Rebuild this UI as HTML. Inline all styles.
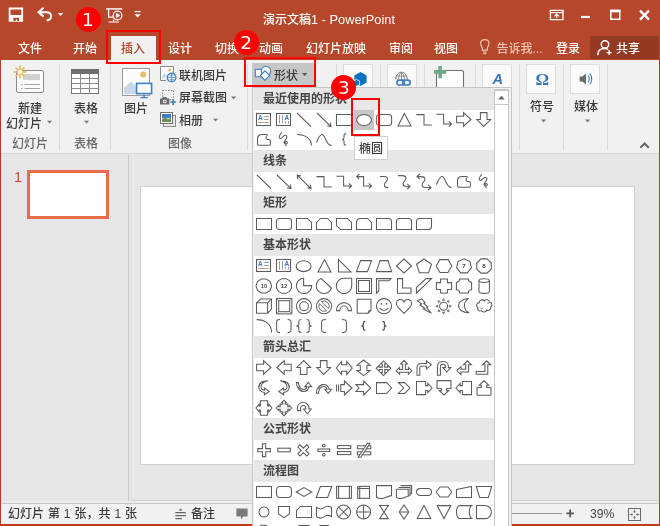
<!DOCTYPE html>
<html lang="zh-CN"><head><meta charset="utf-8"><title>PowerPoint</title>
<style>
html,body{margin:0;padding:0}
body{will-change:transform;width:660px;height:526px;overflow:hidden;position:relative;background:#e6e6e6;
 font-family:"Liberation Sans","Noto Sans CJK SC",sans-serif;font-size:12px;color:#3a3a3a;font-weight:500;}
.a{position:absolute}
.t{position:absolute;white-space:nowrap;line-height:16px;height:16px}
.w{color:#fff}
#title{left:0;top:0;width:660px;height:60px;background:#b7472a}
#ribbon{left:0;top:60px;width:660px;height:94px;background:#f1f1f1;border-bottom:1px solid #d4d4d4;box-sizing:border-box}
.sep{position:absolute;width:1px;background:#dadada;top:64px;height:86px}
.gl{color:#666}
.ibox{position:absolute;box-sizing:border-box;background:#fafafa;border:1px solid #dcdcdc}
#status{left:0;top:503px;width:660px;height:21px;background:#f1f1f1;border-top:1px solid #c9c9c9;box-sizing:border-box}
.hd{position:absolute;left:1px;width:240px;height:22px;background:#e7e7e7}
.hd span{position:absolute;left:9px;top:3px;line-height:16px;font-weight:bold;color:#444;white-space:nowrap}
.rb{position:absolute;box-sizing:border-box;border:2px solid #f00}
.num{position:absolute;width:25px;height:25px;border-radius:50%;background:#fe0000;color:#fff;
 font-family:"DejaVu Sans",sans-serif;font-size:18.5px;line-height:25px;text-align:center}
svg{position:absolute;overflow:visible}
</style></head>
<body>
<div class="a" id="title"></div>
<div class="a" style="left:111px;top:36px;width:45px;height:24px;background:#f1f1f1"></div>
<div class="a" style="left:590px;top:36px;width:69px;height:23px;background:#953a22"></div>
<svg style="left:0;top:0" width="660" height="60" viewBox="0 0 660 60" fill="none" stroke="#fff">
<!-- save -->
<path d="M9.6,8.5 H22.2 V20.8 H9.6 Z" stroke-width="1.8"/>
<path d="M9.6,15 H22.2 V20.8 H9.6 Z" fill="#fff" stroke="none"/>
<path d="M13.4,17.8 H19 V21 H13.4 Z" fill="#b7472a" stroke="none"/>
<path d="M15.8,19.4 H17 V21 H15.8 Z" fill="#fff" stroke="none"/>
<!-- undo -->
<path d="M39,12.2 H46.4 C52.6,12.2 52.6,20.2 46.6,20.4" stroke-width="2.1"/>
<path d="M43.6,7.8 L38.6,12.2 L43.6,16.6" stroke-width="2.1"/>
<path d="M57.8,13 H63.2 L60.5,16 Z" fill="#fff" stroke="none"/>
<!-- slideshow -->
<path d="M106,8.9 H122.3" stroke-width="1.4"/>
<path d="M108.6,9.5 V17.2 H113" stroke-width="1.3"/>
<path d="M113.6,19.6 V22 M108.6,22 H119" stroke-width="1.2"/>
<circle cx="117.5" cy="15.5" r="4.4" stroke-width="1.3"/>
<path d="M116.3,13.2 L120,15.5 L116.3,17.8 Z" fill="#fff" stroke-width=".6"/>
<!-- customize -->
<path d="M134.6,11.6 H140.6" stroke-width="1.3"/>
<path d="M134.4,14.2 H140.8 L137.6,17.4 Z" fill="#fff" stroke="none"/>
<!-- ribbon display -->
<path d="M550.4,10.4 H563 V19.6 H550.4 Z" stroke-width="1.4"/>
<path d="M550.4,12.6 H563" stroke-width="1.2"/>
<path d="M556.7,18 V14.4 M554.4,16.4 L556.7,14.2 L559,16.4" stroke-width="1.2"/>
<!-- minimize -->
<path d="M581,17 H590" stroke-width="2.2"/>
<!-- maximize -->
<path d="M610.8,10.6 H619.8 V19.2 H610.8 Z" stroke-width="1.5"/>
<path d="M610.2,11 H620.4" stroke-width="2.6"/>
<!-- close -->
<path d="M640,10.6 L649,19.6 M649,10.6 L640,19.6" stroke-width="2.3"/>
<!-- lightbulb -->
<path d="M482.4,50.2 V48.6 C482.4,47 480.6,46 480.6,43.6 C480.6,41.2 482.4,39.6 484.8,39.6 C487.2,39.6 489,41.2 489,43.6 C489,46 487.2,47 487.2,48.6 V50.2 Z" stroke="#efc4b6" stroke-width="1.2"/>
<path d="M482.8,52 H486.8 M483.4,53.6 H486.2" stroke="#efc4b6" stroke-width="1.1"/>
<!-- share person -->
<circle cx="605" cy="44.4" r="3.7" stroke-width="1.5"/>
<path d="M597.8,55.2 C597.8,50.6 601,48.6 604.6,48.6 C606,48.6 607,48.8 608,49.4" stroke-width="1.5"/>
<path d="M606.6,52.6 H611.6 M609.1,50.1 V55.1" stroke-width="1.4"/>
</svg>
<div class="t w" style="left:263px;top:11px;font-size:12.8px;line-height:18px;height:18px"><span style="font-size:12px">演示文稿</span>1 - PowerPoint</div>
<div class="t w" style="left:18px;top:40.5px;">文件</div>
<div class="t w" style="left:73px;top:40.5px;">开始</div>
<div class="t w" style="left:168px;top:40.5px;">设计</div>
<div class="t w" style="left:215px;top:40.5px;">切换</div>
<div class="t w" style="left:259px;top:40.5px;">动画</div>
<div class="t w" style="left:306px;top:40.5px;">幻灯片放映</div>
<div class="t w" style="left:389px;top:40.5px;">审阅</div>
<div class="t w" style="left:434px;top:40.5px;">视图</div>
<div class="t " style="left:121px;top:40.5px;color:#b7472a">插入</div>
<div class="t " style="left:496.5px;top:40.5px;color:#efc4b6">告诉我...</div>
<div class="t w" style="left:556px;top:40.5px;">登录</div>
<div class="t w" style="left:616px;top:40.5px;">共享</div>
<div class="a" id="ribbon"></div>
<div class="sep" style="left:59px"></div>
<div class="sep" style="left:110px"></div>
<div class="sep" style="left:247px"></div>
<div class="sep" style="left:336px"></div>
<div class="sep" style="left:380px"></div>
<div class="sep" style="left:424px"></div>
<div class="sep" style="left:475px"></div>
<div class="sep" style="left:519px"></div>
<div class="sep" style="left:563px"></div>
<div class="sep" style="left:607px"></div>
<svg style="left:0;top:60px" width="260" height="93" viewBox="0 60 260 93" fill="none">
<!-- new slide icon -->
<rect x="16.5" y="70.5" width="27" height="22" rx="1.5" fill="#fbfbfb" stroke="#8a8a8a"/>
<rect x="23" y="74" width="17" height="6" fill="#d2d2d2"/>
<path d="M21,84.5 H22.5 M24.5,84.5 H40 M21,88.5 H22.5 M24.5,88.5 H40" stroke="#9a9a9a" stroke-width="0.9"/>
<g stroke="#e2b85c" stroke-width="1.5"><path d="M20,65.6 V78.4 M13.6,72 H26.4 M15.5,67.5 L24.5,76.5 M24.5,67.5 L15.5,76.5"/></g>
<circle cx="20" cy="72" r="2.8" fill="#fdf6e0" stroke="#e2b85c" stroke-width="0.8"/>
<!-- table icon -->
<rect x="71.5" y="69.5" width="27" height="24" fill="#fff" stroke="#777"/>
<rect x="71" y="69" width="28" height="5" fill="#6e6e6e"/>
<path d="M71.5,78.5 H98.5 M71.5,83.5 H98.5 M71.5,88.5 H98.5 M80.5,74 V93.5 M89.5,74 V93.5" stroke="#8a8a8a" stroke-width="1"/>
<!-- picture icon -->
<rect x="122.5" y="68.5" width="27" height="27" fill="#fcfcfc" stroke="#9a9a9a"/>
<path d="M124,94 V88 L131,81.5 L137,87 V94 Z" fill="#c9d9ec"/>
<circle cx="143.2" cy="74.4" r="3" fill="#e8be6a"/>
<rect x="136.6" y="83.4" width="15" height="10.2" fill="#fff" stroke="#3f7fc4" stroke-width="1.6"/>
<path d="M144.1,94.4 V97 M140.6,97.6 H147.6" stroke="#3f7fc4" stroke-width="1.4"/>
<!-- online pictures -->
<path d="M160.5,80.5 V66.5 H173.5 V73" stroke="#8a8a8a" fill="#fbfbfb"/>
<path d="M160.5,80.5 H166" stroke="#8a8a8a"/>
<path d="M162,79 V76 L164.6,73 L167,76" fill="#c9d9ec"/>
<circle cx="169.6" cy="70" r="1.5" fill="#e8be6a"/>
<circle cx="171.6" cy="77.4" r="4.3" fill="#fff" stroke="#3f7fc4" stroke-width="1.3"/>
<path d="M167.4,77.4 H175.8 M171.6,73.2 V81.6 M168.4,75 H174.8 M168.4,79.8 H174.8" stroke="#3f7fc4" stroke-width="0.8"/>
<!-- screenshot -->
<rect x="162.5" y="90.5" width="11" height="9" stroke="#8a8a8a" stroke-dasharray="1.4,1.4" fill="none"/>
<path d="M160,98.4 H162.2 L163,97 H166.4 L167.2,98.4 H169.4 V104.6 H160 Z" fill="#6b6b6b"/>
<circle cx="164.7" cy="101.4" r="1.9" fill="#f1f1f1"/>
<circle cx="164.7" cy="101.4" r="0.9" fill="#6b6b6b"/>
<path d="M170.2,102 H176.2 M173.2,99 V105" stroke="#3f7fc4" stroke-width="1.7"/>
<!-- album -->
<rect x="163.5" y="115.5" width="12" height="11" fill="#e8e8e8" stroke="#8a8a8a"/>
<rect x="160.5" y="112.5" width="12" height="11" fill="#fff" stroke="#6e6e6e"/>
<rect x="162" y="114" width="9" height="4.4" fill="#3f7fc4"/>
<path d="M162,122 V119.6 L165,117.4 L168,119.6 L171,118 V122 Z" fill="#6b8e4e"/>
<!-- small dropdown arrows -->
<g fill="#777">
<path d="M47,120.8 H52.2 L49.6,123.6 Z"/>
<path d="M84,120.8 H89.2 L86.6,123.6 Z"/>
<path d="M231,96.4 H236.2 L233.6,99.2 Z"/>
<path d="M213,118.8 H218.2 L215.6,121.6 Z"/>
</g>
</svg>
<div class="t " style="left:18px;top:101px;">新建</div>
<div class="t " style="left:6px;top:116px;">幻灯片</div>
<div class="t gl" style="left:12px;top:136px;">幻灯片</div>
<div class="t " style="left:74px;top:101px;">表格</div>
<div class="t gl" style="left:74px;top:136px;">表格</div>
<div class="t " style="left:124px;top:101px;">图片</div>
<div class="t " style="left:179px;top:68px;">联机图片</div>
<div class="t " style="left:179px;top:90px;">屏幕截图</div>
<div class="t " style="left:179px;top:113px;">相册</div>
<div class="t gl" style="left:168px;top:136px;">图像</div>
<div class="a" style="left:252px;top:63px;width:62px;height:22px;background:#c6c6c6"></div>
<svg style="left:252px;top:60px" width="70" height="30" viewBox="252 60 70 30" fill="none">
<rect x="255.4" y="69.4" width="8.2" height="7.4" fill="#fafafa" stroke="#4a86c8" stroke-width="1.1"/>
<circle cx="266" cy="71" r="4.7" fill="#fafafa" stroke="#4a86c8" stroke-width="1.1"/>
<path d="M265,70.8 L269.6,75.6 L265,80.4 L260.4,75.6 Z" fill="#fff" stroke="#3f7fc4" stroke-width="1.2"/>
<path d="M302,73 H307.4 L304.7,76 Z" fill="#555"/>
</svg>
<div class="t " style="left:274px;top:68px;">形状</div>
<div class="ibox" style="left:343px;top:64px;width:30px;height:30px"></div>
<div class="ibox" style="left:387px;top:64px;width:30px;height:30px"></div>
<div class="ibox" style="left:482px;top:64px;width:30px;height:30px"></div>
<div class="ibox" style="left:526px;top:64px;width:30px;height:30px"></div>
<div class="ibox" style="left:570px;top:64px;width:30px;height:30px"></div>
<svg style="left:330px;top:60px" width="330" height="93" viewBox="330 60 330 93" fill="none">
<!-- store hexagon -->
<path d="M360.5,72 L366.6,75.5 V82.4 L360.5,85.9 L354.4,82.4 V75.5 Z" fill="#0b70c4"/>
<path d="M356.6,79.4 L359.6,81.1 V84.5 L356.6,86.2 L353.6,84.5 V81.1 Z" fill="#0b70c4" stroke="#f4f4f4" stroke-width="0.9"/>
<!-- link / globe -->
<path d="M395.8,79.6 C395.8,69.8 407.2,69.8 407.2,79.6" stroke="#6e6e6e" stroke-width="1"/>
<path d="M401.5,72.4 V79.6 M396.6,76 H406.4 M398.6,79.6 C398.6,75.6 399.8,73.2 401.5,72.4 C403.2,73.2 404.4,75.6 404.4,79.6" stroke="#7a7a7a" stroke-width="0.8"/>
<rect x="396.9" y="80.2" width="7.6" height="4.8" rx="2.4" stroke="#3f7fc4" stroke-width="1.7"/>
<rect x="402.6" y="80.2" width="7.6" height="4.8" rx="2.4" stroke="#3f7fc4" stroke-width="1.7"/>
<!-- new comment -->
<path d="M436.5,70.5 H461.5 C463,70.5 463.5,71.4 463.5,72.6 V90 H436.5 Z" fill="#fdfdfd" stroke="#707070" stroke-width="1.1"/>
<path d="M434,72.1 H446.2 M440.1,66 V78.2" stroke="#6fa58c" stroke-width="3.5"/>
<!-- speaker -->
<path d="M579.6,76.6 H582.4 L586,73.4 V84.6 L582.4,81.4 H579.6 Z" fill="#6b6b6b"/>
<path d="M588,75.6 C589.6,77.4 589.6,80.6 588,82.4 M589.8,73.6 C592.4,76.4 592.4,81.6 589.8,84.4" stroke="#3f7fc4" stroke-width="1.1"/>
<!-- arrows under labels -->
<g fill="#777">
<path d="M541,119.6 H546.2 L543.6,122.4 Z"/>
<path d="M585,119.6 H590.2 L587.6,122.4 Z"/>
</g>
<!-- collapse chevron -->
<path d="M640.4,147.8 L644.6,143.6 L648.8,147.8" stroke="#666" stroke-width="2.1"/>
</svg>
<div class="t " style="left:535.5px;top:66px;font-family:'Liberation Serif',serif;font-weight:bold;font-size:17px;line-height:28px;height:28px;color:#3b73b9">Ω</div>
<div class="t " style="left:492.5px;top:70px;font-family:'Liberation Sans',sans-serif;font-weight:bold;font-style:italic;font-size:14.6px;line-height:18px;height:18px;color:#3b73b9">A</div>
<div class="t " style="left:530px;top:99px;">符号</div>
<div class="t " style="left:574px;top:99px;">媒体</div>
<div class="a" style="left:128px;top:155px;width:1px;height:347px;background:#c9c9c9"></div>
<div class="a" style="left:131px;top:155px;width:529px;height:346px;box-sizing:border-box;border-left:1px solid #dedede;border-bottom:1px solid #d2d2d2"></div>
<div class="a" style="left:132px;top:155px;width:2px;height:345px;background:#ebebeb"></div>
<div class="a" style="left:27px;top:170px;width:82px;height:49px;box-sizing:border-box;border:3px solid #ec6b4a;background:#fff"></div>
<div class="t " style="left:14px;top:168px;font-size:14.5px;line-height:18px;height:18px;color:#c4492c">1</div>
<div class="a" style="left:140px;top:186px;width:495px;height:279px;box-sizing:border-box;border:1px solid #d0d0d0;background:#fff"></div>
<div class="a" style="left:0;top:501px;width:660px;height:2px;background:#ececec"></div>
<div class="a" id="status"></div>
<div class="t " style="left:8px;top:506px;word-spacing:0.6px">幻灯片 第 1 张，共 1 张</div>
<div class="t " style="left:191px;top:506px;">备注</div>
<div class="t " style="left:590px;top:506px;font-size:12.2px;font-weight:400;color:#444">39%</div>
<svg style="left:0;top:502px" width="660" height="24" viewBox="0 502 660 24" fill="none">
<path d="M178.6,510.6 L180.6,508.4 L182.6,510.6 Z" fill="#666"/>
<path d="M175.4,512.6 H185.8 M175.4,515.6 H185.8 M175.4,518.6 H182" stroke="#666" stroke-width="1.1"/>
<path d="M236.4,508.6 H247.6 V516.4 H243.4 L241,519.4 V516.4 H236.4 Z" fill="#7a7a7a"/>
<path d="M512,513.5 H562" stroke="#9a9a9a" stroke-width="1"/>
<path d="M566.4,513.4 H574 M570.2,509.6 V517.2" stroke="#555" stroke-width="1.8"/>
<rect x="628.5" y="508.5" width="12" height="12" stroke="#6a6a6a" stroke-width="1"/>
<path d="M634.5,509.6 V512.6 M634.5,516.4 V519.4 M629.6,514.5 H632.6 M636.4,514.5 H639.4" stroke="#6a6a6a" stroke-width="0.9"/>
<path d="M633.3,511.4 L634.5,512.8 L635.7,511.4 M633.3,517.6 L634.5,516.2 L635.7,517.6 M631.4,513.3 L632.8,514.5 L631.4,515.7 M637.6,513.3 L636.2,514.5 L637.6,515.7" stroke="#6a6a6a" stroke-width="0.8"/>
</svg>
<div class="a" style="left:0;top:60px;width:1.4px;height:466px;background:#b13d22"></div>
<div class="a" style="left:658.6px;top:60px;width:1.4px;height:466px;background:#b13d22"></div>
<div class="a" style="left:0;top:524.4px;width:660px;height:1.6px;background:#c33a1d"></div>
<div class="a" id="dd" style="left:252px;top:87px;width:260px;height:445px;box-sizing:border-box;background:#f0f0f0;border:1px solid #c6c6c6">
<div class="a" style="left:1px;top:1px;width:240px;height:443px;background:#fff"></div>
<div class="hd" style="top:0px"><span>最近使用的形状</span></div>
<div class="hd" style="top:62px"><span>线条</span></div>
<div class="hd" style="top:104px"><span>矩形</span></div>
<div class="hd" style="top:146px"><span>基本形状</span></div>
<div class="hd" style="top:248px"><span>箭头总汇</span></div>
<div class="hd" style="top:330px"><span>公式形状</span></div>
<div class="hd" style="top:372px"><span>流程图</span></div>
<div class="a" style="left:241px;top:1px;width:15px;height:443px;box-sizing:border-box;background:#fff;border:1px solid #c6c6c6"></div>
<div class="a" style="left:241px;top:2px;width:15px;height:15px;box-sizing:border-box;background:#fff;border:1px solid #c6c6c6"></div>
<svg style="left:241px;top:2px" width="15" height="16" viewBox="0 0 15 16"><path d="M4.2,9.4 H10.8 L7.5,5.8 Z" fill="#6a6a6a"/></svg>
</div>
<svg style="left:0;top:0" width="660" height="526" viewBox="0 0 660 526" fill="#fff" stroke="#5c5c5c" stroke-width="1.05" stroke-linejoin="miter">
<rect x="354" y="110" width="20" height="20" fill="#c6c6c6" stroke="none"/>
<g transform="translate(254,110)"><rect x="2.5" y="3.5" width="14" height="12"/><text x="3.9" y="9.8" font-size="6.4" font-weight="bold" fill="#3b73b9" stroke="none" font-family="Liberation Sans,sans-serif">A</text><path d="M10.2,6.5 H14.8 M10.2,9.5 H14.8" stroke="#8c8c8c" stroke-width=".9" fill="none"/><path d="M4.2,12.5 H14.8" stroke="#b79a86" stroke-width=".9" fill="none"/></g>
<g transform="translate(274,110)"><rect x="2.5" y="3.5" width="14" height="12"/><text x="10.4" y="9.8" font-size="6.4" font-weight="bold" fill="#3b73b9" stroke="none" font-family="Liberation Sans,sans-serif">A</text><path d="M5.5,5.2 V13.6 M8.5,5.2 V13.6" stroke="#909090" stroke-width=".9" fill="none"/><path d="M11.5,11 V13.6 M14.5,11 V13.6" stroke="#7f9cc4" stroke-width=".9" fill="none"/></g>
<g transform="translate(294,110)"><path d="M3,3 L17,16.6" fill="none" /></g>
<g transform="translate(314,110)"><path d="M3,3 L17,16.6 M13.2,15.8 L17,16.6 L16.4,12.6" fill="none" /></g>
<g transform="translate(334,110)"><rect x="2.5" y="4.5" width="15" height="11"/></g>
<g transform="translate(354,110)"><ellipse cx="10" cy="10" rx="7.4" ry="5.5"/></g>
<g transform="translate(374,110)"><rect x="2.4" y="4.5" width="15.2" height="11" rx="2.8"/></g>
<g transform="translate(394,110)"><path d="M10.5,3.4 L17,16 H4 Z" /></g>
<g transform="translate(414,110)"><path d="M2.4,4.6 H10 V15 H17.8" fill="none" /></g>
<g transform="translate(434,110)"><path d="M2.4,4.2 H9.6 V14 H17.6 M14.8,11.4 L17.6,14 L14.8,16.6" fill="none" /></g>
<g transform="translate(454,110)"><path d="M2.6,6.2 H9.6 V2.8 L17,9.5 L9.6,16.2 V12.8 H2.6 Z" /></g>
<g transform="translate(474,110)"><path d="M6.4,2.6 H13 V9.5 H16.6 L9.7,16.4 L2.8,9.5 H6.4 Z" /></g>
<g transform="translate(254,130)"><path d="M3.5,14 V8.6 C3.5,6 5.4,4.5 8,4.5 H12.4 C13.4,4.5 13.6,5.2 12.8,6 C11.4,7.4 11.8,9.5 14,9.5 H15 C16,9.5 16.4,10 16.4,11 V14 C16.4,14.8 16,15.2 15.2,15.2 H4.8 C4,15.2 3.5,14.8 3.5,14 Z" /></g>
<g transform="translate(274,130)"><path d="M7.6,2.2 C6.6,4 4.8,6 5.2,7.4 C5.6,8.8 7,8.6 8,7.6 C9.4,6.2 10.6,5 11.8,5.4 C13.4,6 13,7.6 12,9 C11,10.4 9.6,11.6 10.2,13 C10.8,14.4 13.2,14.4 13.4,12.8 C13.6,11.4 11.4,11.2 11,12.6 C10.8,13.8 11.8,15 12.4,16.2" fill="none" /></g>
<g transform="translate(294,130)"><path d="M3,4.5 C11,4.5 17.5,8.6 17.5,15.6" fill="none" /></g>
<g transform="translate(314,130)"><path d="M2.5,12.6 C4.5,8 5.6,4.5 8,4.5 C11.8,4.5 11.4,15.5 17.6,15.5" fill="none" /></g>
<g transform="translate(334,130)"><path d="M12,3.6 C10.4,3.6 10,4.2 10,5.6 V7.8 C10,8.8 9.4,9.4 8,9.4 C9.4,9.4 10,10 10,11 V13.2 C10,14.6 10.4,15.2 12,15.2" fill="none" /></g>
<g transform="translate(254,172)"><path d="M3,3 L17,16.6" fill="none" /></g>
<g transform="translate(274,172)"><path d="M3,3 L17,16.6 M13.2,15.8 L17,16.6 L16.4,12.6" fill="none" /></g>
<g transform="translate(294,172)"><path d="M3.2,3.2 L17,16.6 M13.2,15.8 L17,16.6 L16.4,12.6 M7,4 L3.2,3.2 L3.8,7.2" fill="none" /></g>
<g transform="translate(314,172)"><path d="M2.4,4.6 H10 V15 H17.8" fill="none" /></g>
<g transform="translate(334,172)"><path d="M2.4,4.2 H9.6 V14 H17.6 M14.8,11.4 L17.6,14 L14.8,16.6" fill="none" /></g>
<g transform="translate(354,172)"><path d="M2.6,4.6 H9.6 V14 H17.6 M14.8,11.4 L17.6,14 L14.8,16.6 M5.2,2 L2.6,4.6 L5.2,7.2" fill="none" /></g>
<g transform="translate(374,172)"><path d="M6,4.4 H10 C14.6,4.4 14.2,8 12,9.8 C9.8,11.6 9.4,15.6 13.6,15.6 H14.2" fill="none" /></g>
<g transform="translate(394,172)"><path d="M4,3.6 H8.4 C12.8,3.6 12.4,7 10.6,8.8 C8.6,10.8 8.2,14.4 12.2,14.4 H16 M13.2,11.8 L16,14.4 L13.2,17" fill="none" /></g>
<g transform="translate(414,172)"><path d="M3,4.6 H7.4 C11.8,4.6 11.4,8 9.6,9.8 C7.6,11.8 7.2,15.4 11.2,15.4 H17 M14.2,12.8 L17,15.4 L14.2,18 M5.8,2 L3,4.6 L5.8,7.2" fill="none" /></g>
<g transform="translate(434,172)"><path d="M2.5,12.6 C4.5,8 5.6,4.5 8,4.5 C11.8,4.5 11.4,15.5 17.6,15.5" fill="none" /></g>
<g transform="translate(454,172)"><path d="M3.5,14 V8.6 C3.5,6 5.4,4.5 8,4.5 H12.4 C13.4,4.5 13.6,5.2 12.8,6 C11.4,7.4 11.8,9.5 14,9.5 H15 C16,9.5 16.4,10 16.4,11 V14 C16.4,14.8 16,15.2 15.2,15.2 H4.8 C4,15.2 3.5,14.8 3.5,14 Z" /></g>
<g transform="translate(474,172)"><path d="M7.6,2.2 C6.6,4 4.8,6 5.2,7.4 C5.6,8.8 7,8.6 8,7.6 C9.4,6.2 10.6,5 11.8,5.4 C13.4,6 13,7.6 12,9 C11,10.4 9.6,11.6 10.2,13 C10.8,14.4 13.2,14.4 13.4,12.8 C13.6,11.4 11.4,11.2 11,12.6 C10.8,13.8 11.8,15 12.4,16.2" fill="none" /></g>
<g transform="translate(254,214)"><rect x="2.5" y="4.5" width="15" height="11"/></g>
<g transform="translate(274,214)"><rect x="2.4" y="4.5" width="15.2" height="11" rx="2.8"/></g>
<g transform="translate(294,214)"><path d="M2.5,4.5 H13.5 L17.5,8.5 V15.5 H2.5 Z" /></g>
<g transform="translate(314,214)"><path d="M6.5,4.5 H13.5 L17.5,8.5 V15.5 H2.5 V8.5 Z" /></g>
<g transform="translate(334,214)"><path d="M2.5,4.5 H13.5 L17.5,8.5 V15.5 H6.5 L2.5,11.5 Z" /></g>
<g transform="translate(354,214)"><path d="M6.5,4.5 H13.5 L17.5,8.5 V15.5 H2.5 V8.5 C2.5,6 4,4.5 6.5,4.5 Z" /></g>
<g transform="translate(374,214)"><path d="M2.5,4.5 H14.5 C16.5,4.5 17.5,5.5 17.5,7.5 V15.5 H2.5 Z" /></g>
<g transform="translate(394,214)"><path d="M5.5,4.5 H14.5 C16.5,4.5 17.5,5.5 17.5,7.5 V15.5 H2.5 V7.5 C2.5,5.5 3.5,4.5 5.5,4.5 Z" /></g>
<g transform="translate(414,214)"><path d="M5.5,4.5 H17.5 V12.5 C17.5,14.5 16.5,15.5 14.5,15.5 H2.5 V7.5 C2.5,5.5 3.5,4.5 5.5,4.5 Z" /></g>
<g transform="translate(254,256)"><rect x="2.5" y="3.5" width="14" height="12"/><text x="3.9" y="9.8" font-size="6.4" font-weight="bold" fill="#3b73b9" stroke="none" font-family="Liberation Sans,sans-serif">A</text><path d="M10.2,6.5 H14.8 M10.2,9.5 H14.8" stroke="#8c8c8c" stroke-width=".9" fill="none"/><path d="M4.2,12.5 H14.8" stroke="#b79a86" stroke-width=".9" fill="none"/></g>
<g transform="translate(274,256)"><rect x="2.5" y="3.5" width="14" height="12"/><text x="10.4" y="9.8" font-size="6.4" font-weight="bold" fill="#3b73b9" stroke="none" font-family="Liberation Sans,sans-serif">A</text><path d="M5.5,5.2 V13.6 M8.5,5.2 V13.6" stroke="#909090" stroke-width=".9" fill="none"/><path d="M11.5,11 V13.6 M14.5,11 V13.6" stroke="#7f9cc4" stroke-width=".9" fill="none"/></g>
<g transform="translate(294,256)"><ellipse cx="9.6" cy="10.2" rx="7.4" ry="5.4"/></g>
<g transform="translate(314,256)"><path d="M10.5,3.6 L17,16 H4 Z" /></g>
<g transform="translate(334,256)"><path d="M4.5,3.6 V16 H17 Z" /></g>
<g transform="translate(354,256)"><path d="M6.6,4.6 H17.6 L13.4,15.6 H2.4 Z" /></g>
<g transform="translate(374,256)"><path d="M6,4.6 H14 L17.6,15.6 H2.4 Z" /></g>
<g transform="translate(394,256)"><path d="M10,3 L17.6,10 L10,17 L2.4,10 Z" /></g>
<g transform="translate(414,256)"><path d="M10.00,3.00 L17.42,8.25 L14.58,16.75 L5.42,16.75 L2.58,8.25 Z" /></g>
<g transform="translate(434,256)"><path d="M6,3.6 H14 L17.8,10 L14,16.4 H6 L2.2,10 Z" /></g>
<g transform="translate(454,256)"><path d="M10.00,2.80 L15.94,5.59 L17.41,11.85 L13.30,16.87 L6.70,16.87 L2.59,11.85 L4.06,5.59 Z" /><text x="10" y="12.1" font-size="6.2" font-weight="bold" fill="#444" stroke="none" text-anchor="middle" font-family="Liberation Sans,sans-serif">7</text></g>
<g transform="translate(474,256)"><path d="M13.02,2.89 L17.30,7.05 L17.30,12.95 L13.02,17.11 L6.98,17.11 L2.70,12.95 L2.70,7.05 L6.98,2.89 Z" /><text x="10" y="12.1" font-size="6.2" font-weight="bold" fill="#444" stroke="none" text-anchor="middle" font-family="Liberation Sans,sans-serif">8</text></g>
<g transform="translate(254,276)"><path d="M17.60,10.00 L16.11,14.35 L12.21,17.04 L7.39,17.04 L3.49,14.35 L2.00,10.00 L3.49,5.65 L7.39,2.96 L12.21,2.96 L16.11,5.65 Z" /><text x="10" y="12.1" font-size="5.7" font-weight="bold" fill="#444" stroke="none" text-anchor="middle" font-family="Liberation Sans,sans-serif">10</text></g>
<g transform="translate(274,276)"><path d="M17.53,11.97 L15.52,15.37 L12.02,17.34 L7.98,17.34 L4.48,15.37 L2.47,11.97 L2.47,8.03 L4.48,4.63 L7.98,2.66 L12.02,2.66 L15.52,4.63 L17.53,8.03 Z" /><text x="10" y="12.1" font-size="5.7" font-weight="bold" fill="#444" stroke="none" text-anchor="middle" font-family="Liberation Sans,sans-serif">12</text></g>
<g transform="translate(294,276)"><path d="M9.6,9.6 H17.7 A7.7,7.7 0 1 1 9.6,2.2 Z" /></g>
<g transform="translate(314,276)"><path d="M7.3,2.6 L17.4,12 A7.7,7.7 0 1 1 7.3,2.6 Z" /></g>
<g transform="translate(334,276)"><path d="M17.7,2.2 V9.9 A7.7,7.7 0 1 1 10,2.2 Z" /></g>
<g transform="translate(354,276)"><rect x="2.5" y="2.5" width="15" height="15"/><rect x="4.5" y="4.5" width="11" height="11"/></g>
<g transform="translate(374,276)"><path d="M2.5,2.6 H17 L15,4.8 H4.8 V15 L2.5,17.2 Z" /></g>
<g transform="translate(394,276)"><path d="M3.5,2.6 H8.6 V12 H17 V17.2 H3.5 Z" /></g>
<g transform="translate(414,276)"><path d="M2.4,17.2 V11.6 L12,2.6 H17.6 Z" /></g>
<g transform="translate(434,276)"><path d="M6.6,3 H13.4 V6.6 H17.6 V13.4 H13.4 V17 H6.6 V13.4 H2.4 V6.6 H6.6 Z" /></g>
<g transform="translate(454,276)"><path d="M5.6,3 H14.4 A3.2,3.2 0 0 0 17.6,6.2 V13.8 A3.2,3.2 0 0 0 14.4,17 H5.6 A3.2,3.2 0 0 0 2.4,13.8 V6.2 A3.2,3.2 0 0 0 5.6,3 Z" /></g>
<g transform="translate(474,276)"><path d="M5,4.6 V15.4 C5,18 15.4,18 15.4,15.4 V4.6 C15.4,2 5,2 5,4.6 Z" /><path d="M5,4.6 C5,7.2 15.4,7.2 15.4,4.6" fill="none" /></g>
<g transform="translate(254,296)"><path d="M2.5,6.8 L6.4,3 H17.4 V13.4 L13.6,17.2 H2.5 Z" /><path d="M2.5,6.8 H13.6 V17.2 M13.6,6.8 L17.4,3" fill="none" /></g>
<g transform="translate(274,296)"><rect x="2.5" y="2.5" width="15.4" height="15.4"/><rect x="4.7" y="4.7" width="11" height="11"/><path d="M2.5,2.5 L4.7,4.7 M17.9,2.5 L15.7,4.7 M2.5,17.9 L4.7,15.7 M17.9,17.9 L15.7,15.7" fill="none" stroke-width=".7"/></g>
<g transform="translate(294,296)"><circle cx="10" cy="10.2" r="7.6"/><circle cx="10" cy="10.2" r="4.4"/></g>
<g transform="translate(314,296)"><circle cx="10" cy="10.2" r="7.6"/><path d="M7.45,5.67 A5.2,5.2 0 0 1 14.53,12.75 Z" stroke-width=".9"/><path d="M12.55,14.73 A5.2,5.2 0 0 1 5.47,7.65 Z" stroke-width=".9"/></g>
<g transform="translate(334,296)"><path d="M2.4,14.6 A7.6,8 0 0 1 17.6,14.6 H14.2 A4.2,4.6 0 0 0 5.8,14.6 Z" /></g>
<g transform="translate(354,296)"><path d="M3.2,3.2 H17 V14.4 L14.2,17.2 H3.2 Z" /><path d="M14.2,17.2 L14.8,15 L17,14.4" fill="none" /></g>
<g transform="translate(374,296)"><circle cx="10" cy="10.2" r="7.6"/><circle cx="7.4" cy="7.8" r=".9" fill="#555" stroke="none"/><circle cx="12.6" cy="7.8" r=".9" fill="#555" stroke="none"/><path d="M5.8,12 C7.6,15.2 12.4,15.2 14.2,12" fill="none" /></g>
<g transform="translate(394,296)"><path d="M10,6.2 C11.4,2 17.6,3 17.6,7.4 C17.6,11 12.6,14.4 10,17.4 C7.4,14.4 2.4,11 2.4,7.4 C2.4,3 8.6,2 10,6.2 Z" /></g>
<g transform="translate(414,296)"><path d="M7.8,2.8 L11.2,6.8 L9.8,7.6 L14,11 L12.6,11.8 L17.4,17.4 L9.4,13 L10.8,12.2 L6,9 L7.6,8 L3.4,4.6 Z" /></g>
<g transform="translate(434,296)"><circle cx="9.6" cy="10.2" r="4"/><path d="M9.6,2.4 L10.7,4.4 H8.5 Z M9.6,18 L10.7,16 H8.5 Z M1.8,10.2 L3.8,9.1 V11.3 Z M17.4,10.2 L15.4,9.1 V11.3 Z M4,4.6 L6.2,5.2 L4.6,6.8 Z M15.2,4.6 L13,5.2 L14.6,6.8 Z M4,15.8 L6.2,15.2 L4.6,13.6 Z M15.2,15.8 L13,15.2 L14.6,13.6 Z" stroke-width=".7" fill="#bbb"/></g>
<g transform="translate(454,296)"><path d="M14.6,2.6 C1,3.6 1,16.2 15,16.8 C9.4,13.6 8.6,6.4 14.6,2.6 Z" /></g>
<g transform="translate(474,296)"><path d="M5.2,6.6 C5.4,3.6 9.4,3.2 10.4,5 C11.6,3 15.4,3.6 15.4,6 C18.2,6 18.8,10 16.6,11 C17.6,13.6 14.4,15.2 12.8,14 C12,16.6 8,16.6 7.4,14.6 C5,15.8 2.8,13.6 4,11.6 C1.6,10.6 2.4,6.6 5.2,6.6 Z" /><path d="M6.4,11.8 C7,12.6 8,12.8 8.8,12.4 M13.2,7.2 C13.8,6.8 14.6,7 15,7.6" fill="none" stroke-width=".8"/></g>
<g transform="translate(254,316)"><path d="M2.6,3.6 C11,3.6 17.6,8 17.6,16.4" fill="none" /></g>
<g transform="translate(274,316)"><path d="M6,3.4 C3.6,3.4 2.6,4.2 2.6,6 V14 C2.6,15.8 3.6,16.6 6,16.6 M13.6,3.4 C16,3.4 17,4.2 17,6 V14 C17,15.8 16,16.6 13.6,16.6" fill="none" /></g>
<g transform="translate(294,316)"><path d="M7.4,3.4 C5.4,3.4 4.8,4 4.8,5.4 V8.2 C4.8,9.4 4,10 2.2,10 C4,10 4.8,10.6 4.8,11.8 V14.6 C4.8,16 5.4,16.6 7.4,16.6 M12.6,3.4 C14.6,3.4 15.2,4 15.2,5.4 V8.2 C15.2,9.4 16,10 17.8,10 C16,10 15.2,10.6 15.2,11.8 V14.6 C15.2,16 14.6,16.6 12.6,16.6" fill="none" /></g>
<g transform="translate(314,316)"><path d="M12,3.4 C9,3.4 7.6,4.2 7.6,6 V14 C7.6,15.8 9,16.6 12,16.6" fill="none" /></g>
<g transform="translate(334,316)"><path d="M8,3.4 C11,3.4 12.4,4.2 12.4,6 V14 C12.4,15.8 11,16.6 8,16.6" fill="none" /></g>
<g transform="translate(354,316)"><path d="M11.4,5.4 C9.8,5.4 9.4,6 9.4,7.2 V8.4 C9.4,9.4 8.8,9.9 7.4,9.9 C8.8,9.9 9.4,10.4 9.4,11.4 V12.6 C9.4,13.8 9.8,14.4 11.4,14.4" fill="none" stroke-width="1.35"/></g>
<g transform="translate(374,316)"><path d="M8.4,5.4 C10,5.4 10.4,6 10.4,7.2 V8.4 C10.4,9.4 11,9.9 12.4,9.9 C11,9.9 10.4,10.4 10.4,11.4 V12.6 C10.4,13.8 10,14.4 8.4,14.4" fill="none" stroke-width="1.35"/></g>
<g transform="translate(254,358)"><path d="M2.6,6.2 H9.6 V2.8 L17,9.5 L9.6,16.2 V12.8 H2.6 Z" /></g>
<g transform="translate(274,358)"><path d="M17.2,6.2 H10.2 V2.8 L2.8,9.5 L10.2,16.2 V12.8 H17.2 Z" /></g>
<g transform="translate(294,358)"><path d="M6.4,16.4 H13 V9.5 H16.6 L9.7,2.6 L2.8,9.5 H6.4 Z" /></g>
<g transform="translate(314,358)"><path d="M6.4,2.6 H13 V9.5 H16.6 L9.7,16.4 L2.8,9.5 H6.4 Z" /></g>
<g transform="translate(334,358)"><path d="M2.2,10 L7.6,3.4 V6.8 H12.8 V3.4 L18.2,10 L12.8,16.6 V13.2 H7.6 V16.6 Z" /></g>
<g transform="translate(354,358)"><path d="M9.6,2 L16.2,7.2 H12.9 V12.4 H16.2 L9.6,17.6 L3,12.4 H6.3 V7.2 H3 Z" /></g>
<g transform="translate(374,358)"><path d="M9.5,3 L12.5,6 H10.7 V9.1 H13.8 V7.3 L16.8,10.3 L13.8,13.3 V11.5 H10.7 V14.6 H12.5 L9.5,17.6 L6.5,14.6 H8.3 V11.5 H5.2 V13.3 L2.2,10.3 L5.2,7.3 V9.1 H8.3 V6 H6.5 Z" /></g>
<g transform="translate(394,358)"><path d="M10,2.4 L13.4,6 H11.4 V11.4 H14.4 V9.4 L17.8,12.8 L14.4,16.2 V14.2 H5.6 V16.2 L2.2,12.8 L5.6,9.4 V11.4 H8.6 V6 H6.6 Z" /></g>
<g transform="translate(414,358)"><path d="M3,17.2 V9.4 C3,6.6 4.6,5.4 7.4,5.4 H12.4 V2.8 L17.4,6.8 L12.4,10.8 V8.2 H7.6 C6.4,8.2 5.8,8.8 5.8,10 V17.2 Z" /></g>
<g transform="translate(434,358)"><path d="M3.4,17.2 V8.4 C3.4,1.8 14.4,1.8 14.4,8.4 V9.6 H16.8 L12.8,14 L8.8,9.6 H11.4 V8.4 C11.4,5.4 6.4,5.4 6.4,8.4 V17.2 Z" /></g>
<g transform="translate(454,358)"><path d="M2.8,12.6 L7,8.6 V11.2 H11.8 V6.8 H9.4 L13.4,2.8 L17.4,6.8 H14.6 V14 H7 V16.6 Z" /></g>
<g transform="translate(474,358)"><path d="M2.2,13.4 H11 V6.8 H8.6 L12.6,2.8 L16.6,6.8 H13.8 V16.2 H2.2 Z" /></g>
<g transform="translate(254,378)"><path d="M13.6,2.8 C8,2.8 4.8,5.6 4.8,9 C4.8,12 7.2,14 10.4,14.6 V16.8 L15.2,13.4 L10.4,10 V12.2 C8.2,11.8 7,10.6 7,9 C7,6.4 9.6,3.8 13.6,2.8 Z" /><path d="M4.8,9 C4.8,6.6 6.4,4.6 9.2,3.6" fill="none" /></g>
<g transform="translate(274,378)"><path d="M6.4,2.8 C12,2.8 15.2,5.6 15.2,9 C15.2,12 12.8,14 9.6,14.6 V16.8 L4.8,13.4 L9.6,10 V12.2 C11.8,11.8 13,10.6 13,9 C13,6.4 10.4,3.8 6.4,2.8 Z" /><path d="M15.2,9 C15.2,6.6 13.6,4.6 10.8,3.6" fill="none" /></g>
<g transform="translate(294,378)"><path d="M2.4,4.6 C2.4,10 5.6,13.4 9.6,13.4 C12.6,13.4 14.4,11.4 15,8.6 H17.6 L14.2,4.4 L10.8,8.6 H13 C12.6,10.4 11.6,11.4 9.8,11.4 C6.8,11.4 4.8,8.4 4.4,4.6 Z" /><path d="M9.6,13.4 C7.4,13.4 5.4,11.6 4.4,9" fill="none" /></g>
<g transform="translate(314,378)"><path d="M2.4,15.2 C2.4,9.8 5.6,6.4 9.6,6.4 C12.6,6.4 14.4,8.4 15,11.2 H17.6 L14.2,15.4 L10.8,11.2 H13 C12.6,9.4 11.6,8.4 9.8,8.4 C6.8,8.4 4.8,11.4 4.4,15.2 Z" /><path d="M9.6,6.4 C7.4,6.4 5.4,8.2 4.4,10.8" fill="none" /></g>
<g transform="translate(334,378)"><path d="M6.8,6.6 H10.4 V3 L18,10 L10.4,17 V13.4 H6.8 Z" /><path d="M2.6,6.6 V13.4 M4.6,6.6 V13.4" fill="none" /></g>
<g transform="translate(354,378)"><path d="M2,6.6 H9.6 V3 L16.8,10 L9.6,17 V13.4 H2 L5,10 Z" /></g>
<g transform="translate(374,378)"><path d="M2.5,4.6 H12.6 L17.6,10 L12.6,15.4 H2.5 Z" /></g>
<g transform="translate(394,378)"><path d="M4.4,4.6 H10.6 L16,10 L10.6,15.4 H4.4 L9.6,10 Z" /></g>
<g transform="translate(414,378)"><path d="M2.5,3.4 H11.6 V7.6 H13.8 V5.4 L18,10 L13.8,14.6 V12.4 H11.6 V16.6 H2.5 Z" /></g>
<g transform="translate(434,378)"><path d="M3,2.6 H17 V10.4 H12.6 V12.6 H14.8 L10,17 L5.2,12.6 H7.4 V10.4 H3 Z" /></g>
<g transform="translate(454,378)"><path d="M17.5,3.4 H8.4 V7.6 H6.2 V5.4 L2,10 L6.2,14.6 V12.4 H8.4 V16.6 H17.5 Z" /></g>
<g transform="translate(474,378)"><path d="M3,17.2 H17 V9.4 H12.6 V7.2 H14.8 L10,2.8 L5.2,7.2 H7.4 V9.4 H3 Z" /></g>
<g transform="translate(254,398)"><path d="M6.4,2.8 H13.6 V8 H14.8 V6.2 L18,10 L14.8,13.8 V12 H13.6 V17.2 H6.4 V12 H5.2 V13.8 L2,10 L5.2,6.2 V8 H6.4 Z" /></g>
<g transform="translate(274,398)"><path d="M10,2.2 L12.6,4.8 H11.2 V6.2 H13.8 V8.8 H15.2 V7.4 L17.8,10 L15.2,12.6 V11.2 H13.8 V13.8 H11.2 V15.2 H12.6 L10,17.8 L7.4,15.2 H8.8 V13.8 H6.2 V11.2 H4.8 V12.6 L2.2,10 L4.8,7.4 V8.8 H6.2 V6.2 H8.8 V4.8 H7.4 Z" /></g>
<g transform="translate(294,398)"><path d="M3.4,12.6 V10.4 C3.4,2.6 15,2.6 15,10.4 V11 H17.2 L13.4,16 L9.6,11 H11.8 V10.4 C11.8,6.4 6.6,6.4 6.6,10.4 V12.6 Z" /></g>
<g transform="translate(254,440)"><path d="M8.5,3.8 H11.7 V8.6 H16.4 V11.8 H11.7 V16.6 H8.5 V11.8 H3.8 V8.6 H8.5 Z" /></g>
<g transform="translate(274,440)"><rect x="3.8" y="8.2" width="12.6" height="3.6"/></g>
<g transform="translate(294,440)"><path d="M6.0,4.8 L9.4,8.2 L12.8,4.8 L15.0,7.0 L11.6,10.4 L15.0,13.8 L12.8,16.0 L9.4,12.6 L6.0,16.0 L3.8,13.8 L7.2,10.4 L3.8,7.0 Z" /></g>
<g transform="translate(314,440)"><rect x="3.9" y="9" width="11.8" height="2.4"/><circle cx="9.8" cy="5.6" r="1.3"/><circle cx="9.8" cy="14.8" r="1.3"/></g>
<g transform="translate(334,440)"><rect x="3.4" y="5.6" width="13.4" height="3"/><rect x="3.4" y="11.6" width="13.4" height="3"/></g>
<g transform="translate(354,440)"><rect x="3.4" y="5.8" width="13.4" height="3"/><rect x="3.4" y="11.8" width="13.4" height="3"/><path d="M13.4,3.2 H16 L6.8,17.2 H4.2 Z" /></g>
<g transform="translate(254,482)"><rect x="2.5" y="4.5" width="15" height="11"/></g>
<g transform="translate(274,482)"><rect x="2.5" y="4.5" width="15" height="11" rx="3.4"/></g>
<g transform="translate(294,482)"><path d="M10,5.6 L17.8,10 L10,14.4 L2.2,10 Z" /></g>
<g transform="translate(314,482)"><path d="M6.4,4.5 H17.8 L13.6,15.5 H2.2 Z" /></g>
<g transform="translate(334,482)"><rect x="2.6" y="4.4" width="14.8" height="11.9"/><path d="M4.6,4.4 V16.3 M15.4,4.4 V16.3" fill="none" /></g>
<g transform="translate(354,482)"><rect x="3.7" y="4.4" width="11.8" height="11.9"/><path d="M5.7,4.4 V16.3 M3.7,6.5 H15.5" fill="none" /></g>
<g transform="translate(374,482)"><path d="M2.5,3.6 H17.5 V13.6 C13.5,13.6 11,16.6 7.6,16.6 C5,16.6 3.6,15.8 2.5,15 Z" /></g>
<g transform="translate(394,482)"><path d="M6.6,3.6 H17.6 V11.6 H16 M4.6,5.4 H16 V13.2 H14.2" fill="#fff"/><path d="M2.4,7.2 H14.2 V14.4 C11,14.4 9.6,16.6 6.6,16.6 C4.6,16.6 3.4,16 2.4,15.4 Z" /></g>
<g transform="translate(414,482)"><rect x="2.5" y="6.5" width="15" height="7" rx="3.5"/></g>
<g transform="translate(434,482)"><path d="M6,5 H14 L17.8,10 L14,15 H6 L2.2,10 Z" /></g>
<g transform="translate(454,482)"><path d="M2.5,7.4 L17.5,4.4 V15.5 H2.5 Z" /></g>
<g transform="translate(474,482)"><path d="M2.4,4.5 H17.6 L14.4,15.5 H5.6 Z" /></g>
<g transform="translate(254,502)"><circle cx="10" cy="10" r="5"/></g>
<g transform="translate(274,502)"><path d="M4.5,4.5 H15.5 V12 L10,15.6 L4.5,12 Z" /></g>
<g transform="translate(294,502)"><path d="M6.4,4.5 H17.5 V15.5 H2.5 V8.4 Z" /></g>
<g transform="translate(314,502)"><path d="M2.5,5.4 C5,7.4 7.6,7.4 10,5.6 C12.4,3.8 15,3.8 17.5,5.4 V14.6 C15,13 12.4,13 10,14.8 C7.6,16.6 5,16.6 2.5,14.6 Z" /></g>
<g transform="translate(334,502)"><circle cx="9.6" cy="10" r="7"/><path d="M4.6,5 L14.6,15 M14.6,5 L4.6,15" fill="none" /></g>
<g transform="translate(354,502)"><circle cx="9.6" cy="10" r="7"/><path d="M2.6,10 H16.6 M9.6,3 V17" fill="none" /></g>
<g transform="translate(374,502)"><path d="M5.6,3.4 H14.4 L5.6,16.6 H14.4 Z" /></g>
<g transform="translate(394,502)"><path d="M10,3 L14.8,10 L10,17 L5.2,10 Z" /><path d="M5.2,10 H14.8" fill="none" /></g>
<g transform="translate(414,502)"><path d="M10,3.4 L16.8,16.4 H3.2 Z" /></g>
<g transform="translate(434,502)"><path d="M3.2,3.6 H16.8 L10,16.6 Z" /></g>
<g transform="translate(454,502)"><path d="M5,3.6 H17.6 C14.6,5.6 14.6,14.4 17.6,16.4 H5 C1.6,14.4 1.6,5.6 5,3.6 Z" /></g>
<g transform="translate(474,502)"><path d="M2.5,3.4 H10.6 C19.6,3.4 19.6,16.6 10.6,16.6 H2.5 Z" /></g>
<g transform="translate(254,522)"><circle cx="9.6" cy="9.6" r="6.6"/></g>
<g transform="translate(274,522)"><path d="M5,7 V15 C5,18 15,18 15,15 V7 C15,4 5,4 5,7 Z" /></g>
<g transform="translate(294,522)"><path d="M5.4,3.5 H14.6 C18.4,3.5 18.4,16 14.6,16 H5.4 C1.6,16 1.6,3.5 5.4,3.5 Z" /></g>
<g transform="translate(314,522)"><path d="M6,3.5 H14 C18,5.6 18,14.4 14,16 H6 L2,10 Z" /></g>
</svg>
<div class="a" style="left:354px;top:136px;width:34px;height:24px;box-sizing:border-box;background:#fff;border:1px solid #d0d0d0"></div>
<div class="t " style="left:359px;top:141px;">椭圆</div>
<div class="rb" style="left:106px;top:30px;width:55px;height:34px"></div>
<div class="rb" style="left:244px;top:56.5px;width:72px;height:30.5px"></div>
<div class="rb" style="left:351px;top:98px;width:29px;height:38px"></div>
<div class="num" style="left:75.5px;top:6.8px">1</div>
<div class="num" style="left:233.6px;top:29.6px">2</div>
<div class="num" style="left:331.4px;top:74.8px">3</div>
</body></html>
